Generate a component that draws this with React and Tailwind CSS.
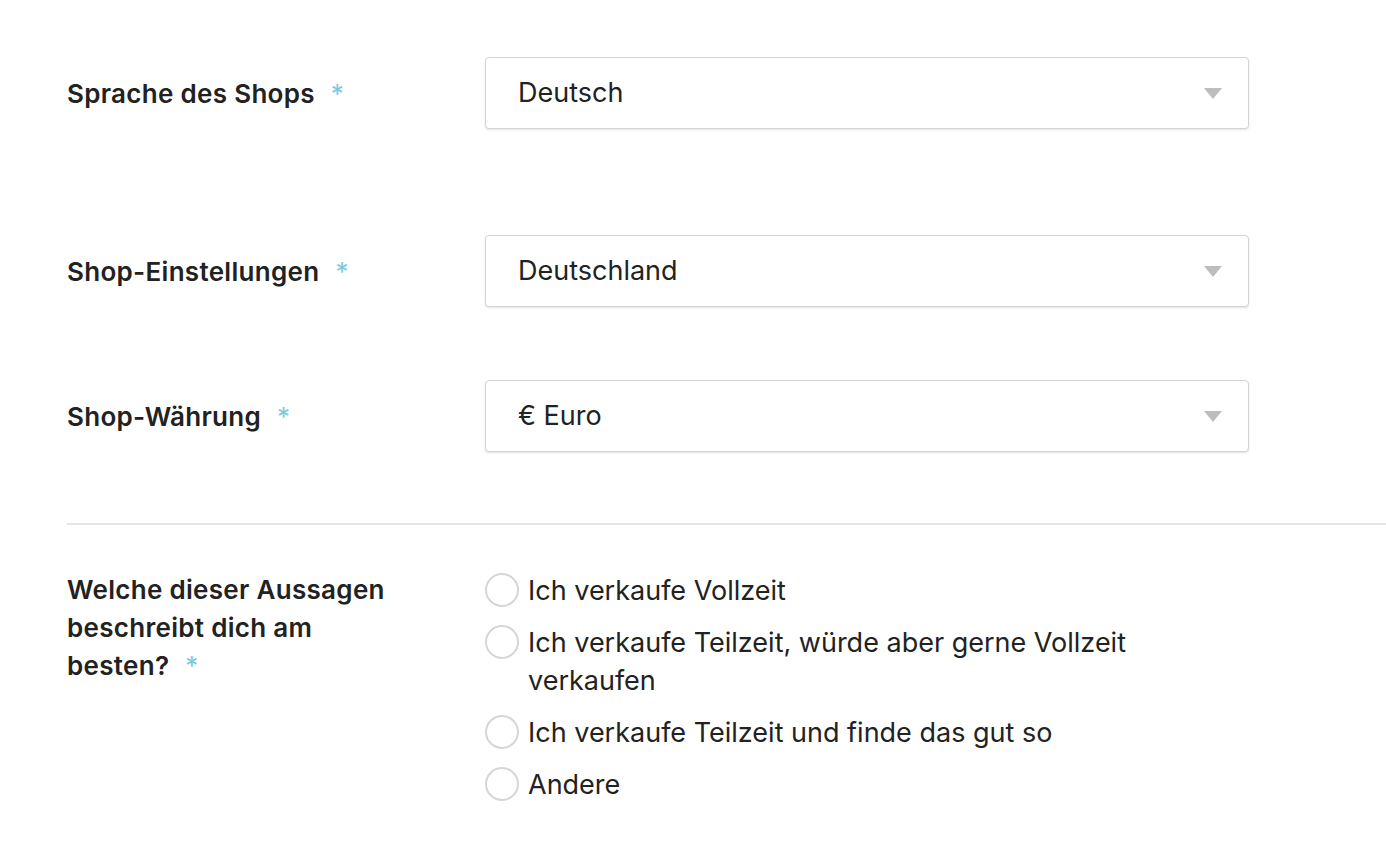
import React from "react";

function Star() {
  return <span className="ml-[16px] text-[#7cc8df] font-normal">*</span>;
}

function Select({ value }) {
  return (
    <div className="w-[764px] h-[72px] border border-[#d4d4d4] rounded-[4px] shadow-[0_1px_2px_rgba(0,0,0,0.12)] bg-white flex items-center justify-between pl-[32px] pr-[26px]">
      <span className="text-[27px] text-[#222]">{value}</span>
      <svg width="18" height="11" viewBox="0 0 18 11"><path d="M0 0 H18 L9 11 Z" fill="#bdbdbd" /></svg>
    </div>
  );
}

function Radio({ children }) {
  return (
    <div className="flex items-start">
      <div className="w-[34px] h-[34px] rounded-full border-2 border-[#d6d6d6] bg-white shrink-0 mt-[1px]" />
      <div className="ml-[9px] text-[27px] leading-[38px] text-[#222] max-w-[640px]">{children}</div>
    </div>
  );
}

export default function App() {
  return (
    <div className="w-[1386px] h-[866px] bg-white overflow-hidden" style={{ fontFamily: "Inter, 'Noto Sans', sans-serif" }}>
      <div className="pl-[67px] pt-[57px]">
        <div className="flex items-center">
          <div className="w-[418px] text-[26px] tracking-[0.3px] font-semibold text-[#222]">Sprache des Shops<Star /></div>
          <Select value="Deutsch" />
        </div>
        <div className="flex items-center mt-[106px]">
          <div className="w-[418px] text-[26px] tracking-[0.3px] font-semibold text-[#222]">Shop-Einstellungen<Star /></div>
          <Select value="Deutschland" />
        </div>
        <div className="flex items-center mt-[73px]">
          <div className="w-[418px] text-[26px] tracking-[0.3px] font-semibold text-[#222]">Shop-Währung<Star /></div>
          <Select value="€ Euro" />
        </div>
        <div className="h-[2px] bg-[#e5e5e5] mt-[71px]" />
        <div className="flex mt-[47px]">
          <div className="w-[418px] pr-[88px]">
            <div className="text-[26px] tracking-[0.3px] leading-[38px] font-semibold text-[#222] mt-[-1px]">
              Welche dieser Aussagen beschreibt dich am besten?<Star />
            </div>
          </div>
          <div className="flex flex-col gap-[14px]">
            <Radio>Ich verkaufe Vollzeit</Radio>
            <Radio>Ich verkaufe Teilzeit, würde aber gerne Vollzeit verkaufen</Radio>
            <Radio>Ich verkaufe Teilzeit und finde das gut so</Radio>
            <Radio>Andere</Radio>
          </div>
        </div>
      </div>
    </div>
  );
}
